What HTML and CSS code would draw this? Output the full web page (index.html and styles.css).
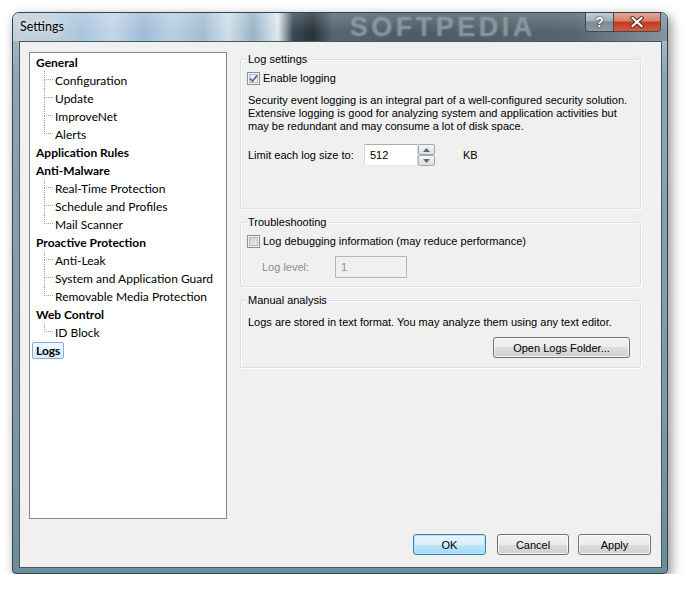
FILE: index.html
```html
<!DOCTYPE html>
<html lang="en">

<head>
    <meta charset="UTF-8">
    <meta name="viewport" content="width=device-width, initial-scale=1.0">
    <title>Settings</title>
    <link rel="stylesheet" href="styles.css">
</head>

<body>
    <div class="window">
        <!-- title bar -->
        <div class="titlebar">
            <span class="title">Settings</span>
            <span class="watermark">SOFTPEDIA</span>
            <div class="caption-buttons">
                <span class="cap cap-help">?</span>
                <span class="cap cap-close">
                    <svg width="14" height="12" viewBox="0 0 14 12">
                        <path d="M2.5 2 L11.5 10 M11.5 2 L2.5 10" stroke="#4a2a22" stroke-width="4" stroke-linecap="square" />
                        <path d="M2.5 2 L11.5 10 M11.5 2 L2.5 10" stroke="#fff" stroke-width="2.2" stroke-linecap="square" />
                    </svg>
                </span>
            </div>
        </div>

        <div class="client">
            <div class="main">
                <!-- category tree -->
                <ul class="tree">
                    <li class="node">General</li>
                    <li class="leaf"><span class="elbow"></span>Configuration</li>
                    <li class="leaf"><span class="elbow"></span>Update</li>
                    <li class="leaf"><span class="elbow"></span>ImproveNet</li>
                    <li class="leaf last"><span class="elbow"></span>Alerts</li>
                    <li class="node">Application Rules</li>
                    <li class="node">Anti-Malware</li>
                    <li class="leaf"><span class="elbow"></span>Real-Time Protection</li>
                    <li class="leaf"><span class="elbow"></span>Schedule and Profiles</li>
                    <li class="leaf last"><span class="elbow"></span>Mail Scanner</li>
                    <li class="node">Proactive Protection</li>
                    <li class="leaf"><span class="elbow"></span>Anti-Leak</li>
                    <li class="leaf"><span class="elbow"></span>System and Application Guard</li>
                    <li class="leaf last"><span class="elbow"></span>Removable Media Protection</li>
                    <li class="node">Web Control</li>
                    <li class="leaf last"><span class="elbow"></span>ID Block</li>
                    <li class="node"><span class="selected">Logs</span></li>
                </ul>

                <div class="panel">
                    <!-- Log settings -->
                    <div class="group group-log">
                        <div class="group-title">Log settings</div>
                        <div class="check-row">
                            <span class="checkbox checked">
                                <svg width="9" height="9" viewBox="0 0 9 9">
                                    <path d="M1 4.5 L3.5 7.2 L8 1.5" fill="none" stroke="#4b6aa8" stroke-width="1.7" />
                                </svg>
                            </span>
                            <span>Enable logging</span>
                        </div>
                        <p class="note">Security event logging is an integral part of a well-configured security solution.
                            Extensive logging is good for analyzing system and application activities but
                            may be redundant and may consume a lot of disk space.</p>
                        <div class="field-row">
                            <span class="field-label">Limit each log size to:</span>
                            <span class="textbox spin-text">512</span>
                            <span class="spin">
                                <span class="spin-btn">
                                    <svg width="7" height="4" viewBox="0 0 7 4"><path d="M0 4 L3.5 0 L7 4 Z" fill="#4d6b9e" /></svg>
                                </span>
                                <span class="spin-btn">
                                    <svg width="7" height="4" viewBox="0 0 7 4"><path d="M0 0 L3.5 4 L7 0 Z" fill="#4d6b9e" /></svg>
                                </span>
                            </span>
                            <span class="unit">KB</span>
                        </div>
                    </div>

                    <!-- Troubleshooting -->
                    <div class="group group-debug">
                        <div class="group-title">Troubleshooting</div>
                        <div class="check-row">
                            <span class="checkbox"></span>
                            <span>Log debugging information (may reduce performance)</span>
                        </div>
                        <div class="field-row level-row">
                            <span class="field-label disabled">Log level:</span>
                            <span class="textbox textbox-disabled">1</span>
                        </div>
                    </div>

                    <!-- Manual analysis -->
                    <div class="group group-manual">
                        <div class="group-title">Manual analysis</div>
                        <p class="note line">Logs are stored in text format. You may analyze them using any text editor.</p>
                        <div class="btn-row">
                            <button class="btn btn-wide">Open Logs Folder...</button>
                        </div>
                    </div>
                </div>
            </div>

            <div class="buttons">
                <button class="btn btn-default">OK</button>
                <button class="btn btn-cancel">Cancel</button>
                <button class="btn btn-apply">Apply</button>
            </div>
        </div>
    </div>
</body>

</html>
```

FILE: styles.css
```css
body {
    margin: 0;
    padding: 0;
    background: #fff;
    font-family: "Liberation Sans", Arial, sans-serif;
    font-size: 11px;
    color: #000;
    overflow: hidden;
}

/* window frame */
.window {
    box-sizing: border-box;
    width: 656px;
    height: 562px;
    margin: 12px 0 0 12px;
    padding: 0 5px 5px 6px;
    border: 1px solid #35444b;
    border-radius: 7px 7px 4px 4px;
    overflow: hidden;
    background: linear-gradient(to bottom, #b7c7d1 0, #8ea6b4 60px, #7e98a6 70%, #6a8c9b 100%);
    box-shadow: 3px 4px 12px rgba(0, 0, 0, 0.45);
}

.titlebar {
    display: flex;
    align-items: flex-start;
    height: 28px;
    margin: 0 -5px 0 -6px;
    padding: 0 5px 0 7px;
    overflow: hidden;
    background:
        linear-gradient(to bottom, rgba(255, 255, 255, 0.18), rgba(255, 255, 255, 0) 70%),
        linear-gradient(to right,
            #c3cfd7 0, #bdd0de 40px, #a9c6df 70px, #c2d6e6 100px, #9fbcd6 130px,
            #b9d0e3 160px, #a4bdd2 190px, #cfdfea 215px, #98b2c6 240px, #dfe9f0 265px,
            #3a4a54 280px, #26323a 300px, #56656f 320px, #4c5b65 400px, #55646e 560px,
            #6c7b85 600px, #8595a0 656px);
}

.title {
    font-family: Lato, "Liberation Sans", sans-serif;
    font-size: 12.5px;
    line-height: 16px;
    margin-top: 6px;
    color: #000;
    text-shadow: 0 0 6px rgba(255, 255, 255, 0.9);
}

.watermark {
    margin-left: 286px;
    margin-top: 1px;
    font-weight: bold;
    font-size: 27px;
    line-height: 26px;
    letter-spacing: 3.5px;
    color: rgba(150, 165, 174, 0.6);
    text-shadow: 0 0 3px rgba(140, 155, 165, 0.5);
    white-space: nowrap;
}

.caption-buttons {
    display: flex;
    margin-left: auto;
    margin-right: 1px;
}

.cap {
    box-sizing: border-box;
    display: flex;
    justify-content: center;
    align-items: center;
    height: 19px;
    border: 1px solid #3e4b52;
    border-top: none;
}

.cap-help {
    width: 28px;
    border-right: none;
    border-radius: 0 0 0 4px;
    background: linear-gradient(to bottom, #c4ced4 0, #a2afb6 45%, #7b8a93 50%, #8c9ba3 100%);
    color: #fff;
    font-weight: bold;
    font-size: 14px;
    text-shadow: 0 0 2px #222, 0 0 1px #222;
}

.cap-close {
    width: 48px;
    border-radius: 0 0 4px 0;
    background: linear-gradient(to bottom, #e7a797 0, #d4806a 45%, #c23a1f 50%, #d55a3e 100%);
}

/* client area */
.client {
    box-sizing: border-box;
    display: flex;
    flex-direction: column;
    height: 527px;
    padding: 10px 10px 12px 9px;
    border: 1px solid #46565d;
    background: #f0f0f0;
}

.main {
    display: flex;
    height: 467px;
}

.tree {
    box-sizing: border-box;
    width: 198px;
    height: 467px;
    margin: 0;
    padding: 0;
    list-style: none;
    background: #fff;
    border: 1px solid #828790;
    font-family: Lato, "Liberation Sans", sans-serif;
    font-size: 12px;
}

.tree li {
    display: flex;
    align-items: center;
    height: 18px;
    white-space: nowrap;
}

.node {
    padding-left: 6px;
    font-weight: bold;
}

.leaf {
    padding-left: 14px;
}

.elbow {
    display: flex;
    flex-direction: column;
    width: 9px;
    height: 18px;
    margin-right: 2px;
}

.elbow::before {
    content: "";
    height: 8px;
    border-left: 1px dotted #a0a0a0;
    border-bottom: 1px dotted #a0a0a0;
}

.elbow::after {
    content: "";
    height: 9px;
    border-left: 1px dotted #a0a0a0;
}

.last .elbow::after {
    border-left-color: transparent;
}

.selected {
    margin-left: -4px;
    padding: 0 3px 0 3px;
    line-height: 15px;
    border: 1px solid #84acdd;
    border-radius: 2px;
    background: linear-gradient(to bottom, #f2f8fd, #d6ebfb);
}

/* right panel */
.panel {
    width: 401px;
    margin-left: 13px;
    padding-top: 7px;
}

.group {
    box-sizing: border-box;
    padding: 0 7px;
    border: 1px solid #d5dfe5;
    border-radius: 3px;
    box-shadow: inset 1px 1px 0 #fff, 1px 1px 0 #fff;
}

.group-log {
    height: 150px;
}

.group-debug {
    height: 65px;
    margin-top: 13px;
}

.group-manual {
    height: 68px;
    margin-top: 13px;
}

.group-title {
    width: fit-content;
    margin: -7px 0 0 -1px;
    padding: 0 1px;
    line-height: 13px;
    background: #f0f0f0;
}

.check-row {
    display: flex;
    align-items: center;
    height: 14px;
    margin-top: 5px;
    margin-left: -1px;
}

.checkbox {
    box-sizing: border-box;
    display: flex;
    justify-content: center;
    align-items: center;
    width: 13px;
    height: 13px;
    margin-right: 3px;
    border: 1px solid #8e8f8f;
    background: linear-gradient(135deg, #c9cdd2, #eff0f1);
    box-shadow: inset 0 0 0 1px #f4f4f4, inset 0 0 0 2px #b6b9bd;
}

.checkbox.checked {
    background: linear-gradient(135deg, #dfe2e6, #fbfbfb);
}

.note {
    margin: 9px 0 0 0;
    line-height: 13px;
}

.field-row {
    display: flex;
    align-items: center;
    height: 22px;
    margin-top: 11px;
}

.field-label {
    width: 116px;
}

.textbox {
    box-sizing: border-box;
    display: flex;
    align-items: center;
    height: 22px;
    padding-left: 5px;
    padding-bottom: 1px;
    background: #fff;
    border: 1px solid;
    border-color: #abadb3 #d6d9df #e3e9ef #d6d9df;
}

.spin-text {
    width: 54px;
}

.spin {
    display: flex;
    flex-direction: column;
    width: 17px;
    height: 22px;
}

.spin-btn {
    box-sizing: border-box;
    display: flex;
    justify-content: center;
    align-items: center;
    height: 11px;
    border: 1px solid #a7a7a7;
    border-radius: 2px;
    background: linear-gradient(to bottom, #f6f6f6, #dedede);
}

.unit {
    margin-left: 28px;
}

.level-row {
    margin-top: 8px;
    padding-left: 14px;
}

.level-row .field-label {
    width: 73px;
}

.disabled {
    color: #8d8d8d;
}

.textbox-disabled {
    width: 72px;
    background: #f0f0f0;
    border-color: #b5b5b5;
    color: #8d8d8d;
}

.btn-row {
    display: flex;
    justify-content: flex-end;
    margin-top: 8px;
    margin-right: 3px;
}

/* buttons */
.btn {
    box-sizing: border-box;
    height: 21px;
    padding: 0;
    font-family: "Liberation Sans", Arial, sans-serif;
    font-size: 11px;
    color: #000;
    border: 1px solid #707070;
    border-radius: 3px;
    background: linear-gradient(to bottom, #f2f2f2 0, #ebebeb 50%, #dddddd 50%, #cfcfcf 100%);
    box-shadow: inset 0 0 0 1px rgba(255, 255, 255, 0.75);
}

.btn-wide {
    width: 137px;
}

.buttons {
    display: flex;
    justify-content: flex-end;
    margin-top: 15px;
}

.btn-default {
    width: 73px;
    border-color: #3c7fb1;
    background: linear-gradient(to bottom, #eaf6fd 0, #d9f0fc 50%, #bee6fd 50%, #a7d9f5 100%);
    box-shadow: inset 0 0 0 1px #b5e3fa;
}

.btn-cancel {
    width: 72px;
    margin-left: 11px;
}

.btn-apply {
    width: 73px;
    margin-left: 9px;
}
```
